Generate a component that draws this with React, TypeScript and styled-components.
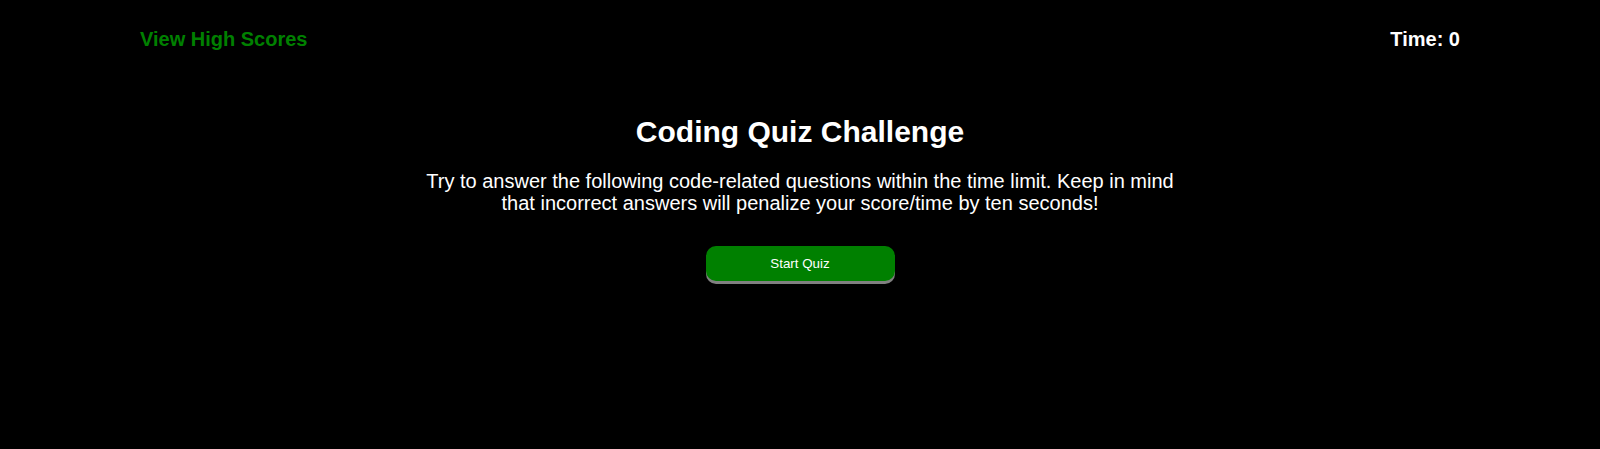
import React from "react";
import styled, { createGlobalStyle } from "styled-components";

const GlobalStyle = createGlobalStyle`
  html, body {
    margin: 0;
    padding: 0;
    background: #000;
    color: #fff;
    font-family: "Liberation Sans", Arial, sans-serif;
  }
`;

const Page = styled.div`
  min-height: 449px;
  background: #000;
`;

const Header = styled.header`
  display: flex;
  justify-content: space-between;
  align-items: center;
  padding: 28px 140px 0;
`;

const HeaderLink = styled.a`
  color: #008000;
  font-weight: bold;
  font-size: 20px;
  text-decoration: none;
  cursor: pointer;
`;

const Timer = styled.div`
  color: #fff;
  font-weight: bold;
  font-size: 20px;
`;

const Main = styled.main`
  display: flex;
  flex-direction: column;
  align-items: center;
  margin-top: 64px;
`;

const Title = styled.h1`
  margin: 0;
  font-size: 30px;
  font-weight: bold;
  text-align: center;
`;

const Intro = styled.p`
  margin: 22px 0 0;
  max-width: 770px;
  font-size: 20px;
  line-height: 21.5px;
  text-align: center;
`;

const StartButton = styled.button`
  margin-top: 32px;
  width: 189px;
  height: 35px;
  border: none;
  border-radius: 10px;
  background: #008000;
  color: #fff;
  font-family: "Liberation Sans", Arial, sans-serif;
  font-size: 13.33px;
  box-shadow: 0 3px 0 #808080;
  cursor: pointer;
`;

export default function App() {
  return (
    <Page>
      <GlobalStyle />
      <Header>
        <HeaderLink>View High Scores</HeaderLink>
        <Timer>Time: 0</Timer>
      </Header>
      <Main>
        <Title>Coding Quiz Challenge</Title>
        <Intro>
          Try to answer the following code-related questions within the time
          limit. Keep in mind that incorrect answers will penalize your
          score/time by ten seconds!
        </Intro>
        <StartButton>Start Quiz</StartButton>
      </Main>
    </Page>
  );
}
